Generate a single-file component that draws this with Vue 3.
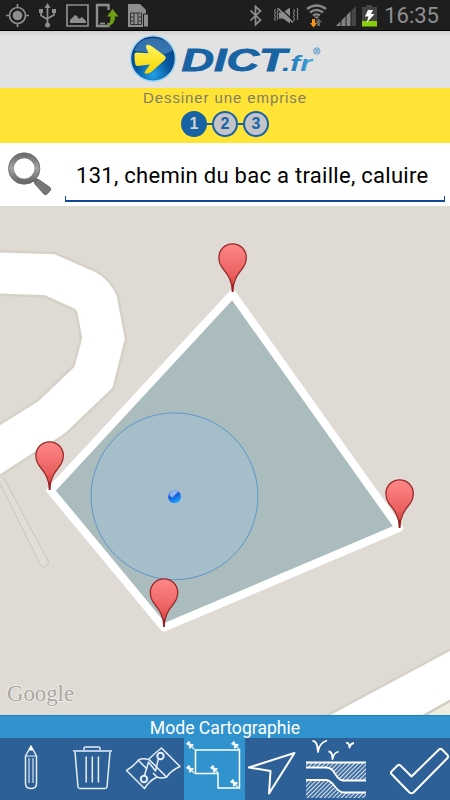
<template>
  <div class="phone">
    <header class="status">
      <svg viewBox="0 0 450 30">
        <g class="gray-line">
          <circle cx="17.5" cy="15.5" r="8" />
          <path d="M17.500 4v4M17.500 23v4M6 15.500h4M25 15.500h4" />
        </g>
        <circle cx="17.500" cy="15.500" r="4.800" class="gray" />
        <path d="M47.500 7v17M41 11v4.500l6.500 4M54 10v5l-6.500 3.500" class="gray-line" />
        <path d="M47.500 3l3 5h-6zM39 9h4v4h-4zM52 9h4v4h-4z" class="gray" />
        <circle cx="47.500" cy="25" r="2.500" class="gray" />

        <path d="M67 5h21v21H67z" class="gray-line" />
        <path d="M70 23v-3l5-5 2 1 2 3 3-2 4 4v2z" class="gray" />
        <path d="M108.500 10V5H97v21h11.500v-3" class="gray-line thick" />
        <path d="M100 23.500h5" class="gray-line" />
        <path d="M112.500 9l6 7.500h-3.500c0 6-3 9.500-8.500 9.500 3-2 4-4 4-9.500H107z" fill="#6f9e12" />
        <path d="M128 4h12l6 6v17h-18z" class="gray" />
        <path d="M130.500 13h11v11.500h-11zM134 13v11.500M138 13v11.500M130.500 17h3.500M130.500 21h3.500M138 17h3.500M138 21h3.500" class="chip" />
        <path d="M143.500 14h5v13h-5z" class="gray" stroke="#1e1e1e" />

        <path d="M250.500 10.500l10 9.500-5 4.500V6.500l5 4.500-10 9.500" class="gray-line" />
        <path d="M279 12.500h4l7-5v16l-7-5h-4z" class="gray" />
        <path d="M279 7l16 15" stroke="#1e1e1e" stroke-width="1.500" />
        <path d="M277.500 8l15.500 14.500" class="gray-line" />
        <path d="M275.500 9l-1 2 1 2-1 2 1 2-1 2 1 2M278 10l-1 2 1 2-1 2 1 2-1 2M293.500 9l1 2-1 2 1 2-1 2 1 2-1 2M297 8l1 2-1 2 1 2-1 2 1 2-1 2" class="gray-line thin" />
        <g class="wifi">
          <path d="M307 9q9.500-7 19 0M310 12.500q6.500-5 13 0M313 15.500q3.500-2.500 7 0" />
        </g>
        <path d="M314 16.500h5l-2.500 2.500z" class="gray" />
        <path d="M312 19h3v4h2l-3.500 4.500L310 23h2z" fill="#f7981d" />
        <path d="M318.500 18l3.500 4.500h-2V26h-3v-3.500h-2z" fill="#666" />
        <path d="M336 26l20-20v20z" fill="#454545" />
        <path d="M336 26l15-15v15z" fill="#858585" />
        <path d="M341 20v6M346 15v11M351 11v15" stroke="#1e1e1e" stroke-width="1" />
        <path d="M362 7h4V5h6v2h5v19h-15z" fill="#444" />
        <path d="M362 21h15v5.500h-15z" fill="#89cc0b" />
        <path d="M368 10h5l-2 4h3.500l-8 9 2-6.500H365z" fill="#fff" />
      </svg>
      <span class="clock">16:35</span>
    </header>

    <div class="brand">
      <svg viewBox="120 31 210 57">
        <defs>
          <radialGradient id="orb" cx=".5" cy=".85" r=".85">
            <stop offset="0" stop-color="#20a2e6" />
            <stop offset=".45" stop-color="#07589f" />
            <stop offset="1" stop-color="#073b82" />
          </radialGradient>
          <linearGradient id="arrow" x1="0" y1="0" x2="0" y2="1">
            <stop offset="0" stop-color="#fff45d" />
            <stop offset="1" stop-color="#f6d500" />
          </linearGradient>
          <linearGradient id="fr" x1="0" y1="0" x2="1" y2="0">
            <stop offset="0" stop-color="#1767a7" />
            <stop offset="1" stop-color="#43a9e0" />
          </linearGradient>
        </defs>
        <ellipse cx="153" cy="58.500" rx="22.500" ry="22.800" fill="url(#orb)" stroke="#a7d7f0" stroke-width="1.500" />
        <path d="M134 51q5-13 20-13 15 1 19 12-8 6-18 5-11-4-21-4z" fill="#6fa9d4" opacity=".45" />
        <path d="M134.500 54q.3-1.500 2-1.500l12 .7-2.500-6q-.5-3 3-2.200 2 .5 3.500 1.800l12.500 9.200q1.800 1.800 0 3.800l-13.500 12q-3 2.200-6 2-1.500-.5-.5-2.300l5-7-12.500 1.500q-2 0-2.300-2.500-1-5-.7-9.500z" fill="url(#arrow)" />
        <text x="181.500" y="71.300" class="word" textLength="105" lengthAdjust="spacingAndGlyphs">DICT</text>
        <text x="282" y="71.300" class="tld" textLength="30" lengthAdjust="spacingAndGlyphs">.fr</text>
        <circle cx="316.800" cy="51" r="3.200" fill="none" stroke="#3b8fc8" stroke-width=".8" />
        <text x="315.100" y="53" class="reg">R</text>
      </svg>
    </div>

    <section class="steps">
      <h1>Dessiner une emprise</h1>
      <ol>
        <li v-for="n in 3" :key="n" :class="{ current: n === step }">{{ n }}</li>
      </ol>
    </section>

    <section class="search">
      <svg class="lens" viewBox="0 143 60 62">
        <defs>
          <linearGradient id="metal" x1="0" y1="0" x2="0" y2="1">
            <stop offset="0" stop-color="#707070" />
            <stop offset=".5" stop-color="#a2a2a2" />
            <stop offset="1" stop-color="#686868" />
          </linearGradient>
        </defs>
        <path d="M33 178l5 5" stroke="#777" stroke-width="5" />
        <path d="M38.500 179.500q-4 0-3.500 4.500l9 10q2 1.500 3.500-.5l3-3.500q.8-1.500-.5-2.500z" fill="#777" stroke="#606060" />
        <circle cx="24.200" cy="168.500" r="13" fill="none" stroke="url(#metal)" stroke-width="5.500" />
        <circle cx="24.200" cy="168.500" r="15.700" fill="none" stroke="#686868" stroke-width=".8" />
      </svg>
      <div class="field"><span>{{ address }}</span></div>
    </section>

    <main class="map">
      <svg viewBox="0 206 450 509">
        <defs>
          <linearGradient id="pin-red" x1="0" y1="0" x2="0" y2="1">
            <stop offset="0" stop-color="#ff8888" />
            <stop offset=".65" stop-color="#e9605f" />
            <stop offset="1" stop-color="#c92b2b" />
          </linearGradient>
          <linearGradient id="dot" x1=".2" y1="0" x2=".7" y2="1">
            <stop offset="0" stop-color="#8eb0f4" />
            <stop offset=".4" stop-color="#1558d6" />
            <stop offset="1" stop-color="#18aaff" />
          </linearGradient>
          <g id="pin">
            <path d="M0-.5C-.8-11.500-4.500-17-9-22.500-12-26-13.700-30-13.700-34.500A13.700 13.700 0 0 1 13.700-34.500C13.700-30 12-26 9-22.500 4.500-17 .8-11.500 0-.5z" fill="url(#pin-red)" stroke="#9a2b2d" stroke-width="1.300" />
            <path d="M0 0v-8" stroke="#9a1b20" stroke-width="1.800" />
          </g>
        </defs>

        <path d="M-5 251L55 253 95 270.500Q111 279 118 296L126 339 113.500 388.500 67 433 Q58 440 35 453L-5 479V427L38 400 73.500 366 81 338 76.500 314Q76 310 72 309L45 296.500-5 294.500z" class="road" />
        <path d="M-5 475L1 485 39 562Q42 569 46 566.500 49.500 564 48 560.500L3 477" class="path" />
        <path d="M326 716L455 647V740H326z" class="road" />
        <path d="M423 716L455 698V740z" class="lane" />

        <polygon :points="outline" class="area" />
        <circle cx="174.500" cy="496.300" r="83.400" class="accuracy" />
        <circle cx="174.500" cy="496.700" r="6.500" fill="url(#dot)" />
        <path d="M170 494q4-5 8-2l-5 5q-3 1-3-3z" fill="#dce8ff" opacity=".6" />
        <use v-for="p in pins" :key="p.x" href="#pin" :x="p.x" :y="p.y" />
        <text x="7" y="700.500" class="google" textLength="67" lengthAdjust="spacingAndGlyphs">Google</text>
      </svg>
    </main>

    <div class="mode">Mode Cartographie</div>

    <nav class="tools">
      <button>
        <svg viewBox="0 738 61 62">
          <path d="M25.500 756v27.500q0 5 5.500 5t5.500-5V756L31 746z" />
          <path d="M25.500 756h11M29 758v25M33 758v25" class="fine" />
          <path d="M28.500 750.500l2.500-5 2.500 5z" class="solid" />
        </svg>
      </button>
      <button>
        <svg viewBox="61 738 62 62">
          <path d="M73 751h39M75 752l3 35q.2 1.500 2 1.500h25q1.800 0 2-1.500l3-35M84 750v-1.500q0-1.500 1.500-1.500h13q1.500 0 1.500 1.500v1.500" />
          <path d="M86.200 756.500v26M92.300 756.500v26M98.400 756.500v26" />
        </svg>
      </button>
      <button>
        <svg viewBox="123 738 61 62">
          <path d="M126.500 770.500q8-5 12-10.500 4-2 10-.5 7-7 13-11.500l18.500 18.500q-9 4-13.500 10.500-5 2-9.500 0-8 4-12.500 11.500z" />
          <path d="M138.500 760.500L147 769M149 759.500l18 18M157 777l-4-4" />
          <path d="M144.500 775.500l4-13.500 7 9 4-17" />
          <circle cx="160.500" cy="756" r="3.200" class="knob" />
          <circle cx="144" cy="779" r="3.200" class="knob" />
        </svg>
      </button>
      <button class="active">
        <svg viewBox="184 738 61 62">
          <path d="M195.500 750h44v38H218v-14.500h-22.500z" class="straight" />
          <g v-for="t in tacks" :key="t.join()" :transform="`translate(${t[0]} ${t[1]})`">
            <path d="M-3.700-1.200L-1.200-3.700-.2-2.700-.2-1.700 1-.5 2.700-1 3.500 0 0 3.500-1 2.700-.5 1-1.700-.2-2.700-.2z" class="tack" />
            <path d="M1 1l3.500 3.500" class="fine" />
          </g>
        </svg>
      </button>
      <button>
        <svg viewBox="245 738 61 62">
          <path d="M248.800 767.500L294.500 753 269 793.500 270.500 771z" class="bold" />
        </svg>
      </button>
      <button>
        <svg viewBox="306 738 61 62">
          <defs>
            <pattern id="hatch" width="3" height="3" patternUnits="userSpaceOnUse" patternTransform="rotate(45)">
              <path d="M1.500 0v3" class="hatch" />
            </pattern>
          </defs>
          <path d="M306 763h60v18h-23q-3-1-6-6-4-6-9-7h-22z" class="ground" />
          <path d="M306 780h20q5 2 8 7 4 6 9 6h23v5h-60z" class="ground" />
          <path d="M306 762.500h60M306 767.500h20c10 0 9 13 17 13h23M306 780h20c9 1 9 12.500 18 12.500h22" class="edge" />
          <path d="M312.500 741q5-.5 5.500 11 1-9 9-11.500M328.500 751.500q4 0 4 7.500 1-6 6-7.500M346 743q3-1 3.500 4.500 1-4 4.500-4.500" class="edge" />
        </svg>
      </button>
      <button class="ok">
        <svg viewBox="367 738 83 62">
          <path d="M391.500 774q-1-1.200 0-2.500l6-6q1.500-1.200 3 0l11 11L439 749.500q1.500-1.200 3 0l5.500 5.500q1.200 1.500 0 3L413.500 792.500q-2 1.500-4 0z" class="bold" />
        </svg>
      </button>
    </nav>
  </div>
</template>

<script setup>
import { computed, ref } from 'vue'

const step = ref(1)
const address = ref('131, chemin du bac a traille, caluire')

const corners = ref([
  { x: 232.5, y: 294 },
  { x: 399, y: 528 },
  { x: 164, y: 627.5 },
  { x: 50.5, y: 490.5 },
])

const outline = computed(() => corners.value.map(c => `${c.x},${c.y}`).join(' '))

// pin tips, a touch off the corners
const pins = [
  { x: 232.6, y: 292 },
  { x: 399.6, y: 528 },
  { x: 164, y: 627 },
  { x: 49.6, y: 490 },
]

const tacks = [
  [190, 745],
  [190, 769],
  [214, 769],
  [235, 745],
  [234, 783],
]
</script>

<style>
  body {
    margin: 0;
    background: #000;
  }
</style>

<style scoped>
  .phone {
    width: 450px;
    height: 800px;
    display: flex;
    flex-direction: column;
    overflow: hidden;
    font-family: Roboto, sans-serif;
  }

  svg {
    display: block;
  }

  .status {
    height: 30px;
    flex: none;
    display: grid;
    background: #1e1e1e;
    border-bottom: 1px solid #000;
  }

  .status > * {
    grid-area: 1 / 1;
  }

  .status svg {
    width: 450px;
    height: 30px;
  }

  .clock {
    justify-self: end;
    padding-right: 11px;
    color: #8e8e8e;
    font-size: 22px;
    line-height: 31px;
  }

  .gray {
    fill: #8e8e8e;
  }

  .gray-line {
    fill: none;
    stroke: #8e8e8e;
    stroke-width: 1.7;
  }

  .gray-line.thick {
    stroke-width: 2.4;
  }

  .gray-line.thin {
    stroke-width: 1;
  }

  .chip {
    fill: none;
    stroke: #333;
    stroke-width: 1;
  }

  .wifi path {
    fill: none;
    stroke: #858585;
    stroke-width: 2.4;
  }

  .brand {
    height: 57px;
    flex: none;
    padding-left: 120px;
    background: linear-gradient(#cfcfcf, #e2e2e2 5px);
  }

  .brand svg {
    width: 210px;
    height: 57px;
  }

  .word {
    font: italic bold 32px "Liberation Sans", sans-serif;
    fill: #1763a3;
    stroke: #1763a3;
    stroke-width: .9;
  }

  .tld {
    font: italic bold 22px "Liberation Sans", sans-serif;
    fill: url(#fr);
  }

  .reg {
    font: bold 5px "Liberation Sans", sans-serif;
    fill: #3b8fc8;
  }

  .steps {
    height: 55px;
    flex: none;
    display: flex;
    flex-direction: column;
    align-items: center;
    background: #ffe436;
  }

  h1 {
    margin: 0;
    font: 15px/19px "Liberation Sans", sans-serif;
    letter-spacing: .9px;
    color: #807c64;
  }

  ol {
    display: flex;
    gap: 5px;
    margin: 4px 0 0;
    padding: 0;
    list-style: none;
    background: linear-gradient(#1763a3 0 0) center / 60px 2px no-repeat;
  }

  li {
    width: 22px;
    height: 22px;
    border: 2px solid #1763a3;
    border-radius: 50%;
    background: #c3c3c9;
    color: #1763a3;
    font: bold 16px/22px "Liberation Sans", sans-serif;
    text-align: center;
  }

  li.current {
    background: #1763a3;
    color: #d0d0d4;
  }

  .search {
    height: 63px;
    flex: none;
    display: flex;
    background: #fff;
  }

  .lens {
    width: 60px;
    height: 62px;
  }

  .field {
    width: 380px;
    height: 59px;
    margin-left: 5px;
    padding-left: 11px;
    box-sizing: border-box;
    border-bottom: 2px solid #124a94;
    background:
      linear-gradient(#124a94 0 0) 0 100% / 1px 4px no-repeat,
      linear-gradient(#124a94 0 0) 100% 100% / 1px 4px no-repeat;
    color: #000;
    font-size: 22px;
    line-height: 65px;
    letter-spacing: .28px;
    white-space: nowrap;
  }

  .map {
    height: 509px;
    flex: none;
    background: #dfdbd4;
  }

  .map svg {
    width: 450px;
    height: 509px;
  }

  .road {
    fill: #fff;
    stroke: #d6d1c7;
    stroke-width: 2.5;
  }

  .lane {
    fill: #eeebdf;
    stroke: #d0cbc0;
    stroke-width: 2.5;
  }

  .path {
    fill: #e2ded7;
    stroke: #c7c3bc;
    stroke-width: 1;
  }

  .area {
    fill: #abbcbe;
    stroke: #fff;
    stroke-width: 8;
    stroke-linejoin: round;
  }

  .accuracy {
    fill: #a6bec9;
    stroke: #5c97cc;
    stroke-width: 1;
  }

  .google {
    font: 23px "Liberation Serif", serif;
    fill: #aaa7a2;
    stroke: #f2f0ec;
    stroke-width: 1.5;
    paint-order: stroke;
  }

  .mode {
    height: 23px;
    flex: none;
    box-sizing: border-box;
    border-top: 1px solid #1782bd;
    background: #3193ce;
    color: #fff;
    font-size: 17.6px;
    line-height: 25px;
    text-align: center;
  }

  .tools {
    height: 62px;
    flex: none;
    display: grid;
    grid-template-columns: 61px 62px 61px 61px 61px 61px 83px;
    background: #2e6098;
  }

  button {
    padding: 0;
    border: 0;
    background: none;
  }

  button.active {
    background: #3193ce;
  }

  button svg {
    width: 100%;
    height: 62px;
  }

  button path,
  button circle {
    fill: none;
    stroke: #e6eef6;
    stroke-width: 1.5;
    stroke-linejoin: round;
  }

  button .fine {
    stroke-width: 1.1;
  }

  button .solid {
    fill: #fff;
    stroke: none;
  }

  button .tack {
    fill: #fff;
    stroke: #fff;
    stroke-width: .5;
  }

  button .bold {
    stroke: #fff;
    stroke-width: 2;
  }

  button .edge {
    stroke: #fff;
    stroke-width: 1.8;
  }

  button .knob {
    fill: #2e6098;
    stroke-width: 2;
  }

  button .straight {
    stroke: #fff;
    stroke-linejoin: miter;
  }

  button .hatch {
    stroke: #dce6f0;
    stroke-width: 1.2;
  }

  button .ground {
    fill: url(#hatch);
    stroke: none;
  }
</style>
